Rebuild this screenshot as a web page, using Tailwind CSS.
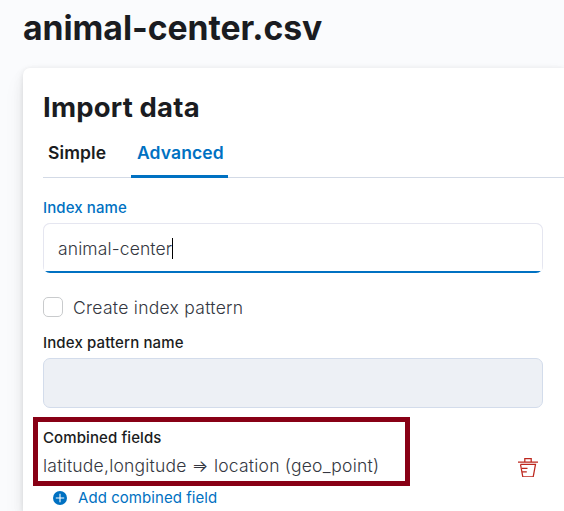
<!DOCTYPE html>
<html lang="en">
<head>
<meta charset="utf-8">
<title>Import data</title>
<script src="https://cdn.jsdelivr.net/npm/@tailwindcss/browser@4"></script>
</head>
<body class="h-[511px] overflow-hidden bg-[#fafbfd] font-['Inter',sans-serif] text-[#343741]">
<main class="h-[511px] overflow-hidden pl-[23px]">
  <h1 class="h-[68px] pt-[8px] text-[33.75px] leading-[40px] font-bold tracking-[-0.05px] text-[#1a1c21] whitespace-nowrap">animal-center.csv</h1>
  <section class="h-[443px] rounded-tl-[7px] bg-white pl-5 shadow-[0_1px_5px_rgba(0,0,0,0.08),0_4px_12px_rgba(0,0,0,0.07),0_12px_22px_rgba(0,0,0,0.06)]">
    <h2 class="h-[64px] pt-[22px] text-[27.5px] leading-[34px] font-bold tracking-[0.18px] text-[#1a1c21] whitespace-nowrap">Import data</h2>
    <nav class="flex h-[46px] border-b border-[#d3dae6] text-[17.5px] leading-[42px] font-semibold tracking-[0.12px]">
      <a class="ml-[5px] w-[83px] text-[#1a1c21]">Simple</a>
      <a class="h-[46px] w-[97px] border-b-[3px] border-[#0071c2] pl-[6px] text-[#0071c2]">Advanced</a>
    </nav>
    <form class="w-[500px]">
      <label class="block h-[45px] pt-[20px] text-[15px] leading-[20px] font-medium tracking-[0.1px] text-[#0071c2]">Index name</label>
      <div class="h-[50px] overflow-hidden rounded-[7px] bg-[linear-gradient(to_top,#0071c2_2px,#e5e6f0_2px)]">
        <div class="flex h-[48px] items-center rounded-t-[7px] border border-b-0 border-[#e5e6f0] bg-white pt-[2px] pl-[14px]">
          <span class="text-[17.5px] leading-[24px] font-light tracking-[0.12px]">animal-center</span><span class="h-[21px] w-px bg-black"></span>
        </div>
      </div>
      <div class="mt-[24px] flex h-5 items-center gap-[10px]">
        <span class="size-5 rounded-[5px] border border-[#c9cbcd] bg-white"></span>
        <span class="relative top-px text-[17.5px] leading-[24px] font-light tracking-[0.28px]">Create index pattern</span>
      </div>
      <label class="block h-[41px] pt-[16px] text-[15px] leading-[20px] font-medium tracking-[0.13px] text-[#1a1c21]">Index pattern name</label>
      <div class="h-[50px] rounded-[7px] border border-[#d3dceb] bg-[#edf0f5]"></div>
    </form>
    <div class="mt-[9px] flex">
      <div class="-ml-[10px] h-[69px] w-[377px] border-5 border-[#880015] pt-[6px] pl-[5px]">
        <h3 class="h-[26px] pt-[1px] text-[15px] leading-[18px] font-medium tracking-[0.1px] text-[#1a1c21]">Combined fields</h3>
        <p class="text-[17.5px] leading-[24px] font-light tracking-[0.22px] whitespace-nowrap">latitude,longitude ⇒ location (geo_point)</p>
      </div>
      <svg class="mt-[40px] ml-[108px] size-[20px]" viewBox="0 0 20 20" fill="none" stroke="#bd271e" stroke-width="1.25"><path d="M0 5.2H20M6.8 5.2V1.6H13.2V5.2M2.5 7.3L4.8 19.9H15.2L17.5 7.3H2.5M4 11.3H9.5M4.5 14.8H8.8"/></svg>
    </div>
    <a class="flex h-[24px] items-center gap-[11px] pl-[10px] text-[15px] leading-[20px] tracking-[0.06px] text-[#0071c2]">
      <svg class="size-[14px]" viewBox="0 0 14 14"><circle cx="7" cy="7" r="7" fill="#0071c2"/><path d="M7 2.8V11.2M2.8 7H11.2" stroke="#fff" stroke-width="1.1"/></svg>
      <span>Add combined field</span>
    </a>
  </section>
</main>
</body>
</html>
